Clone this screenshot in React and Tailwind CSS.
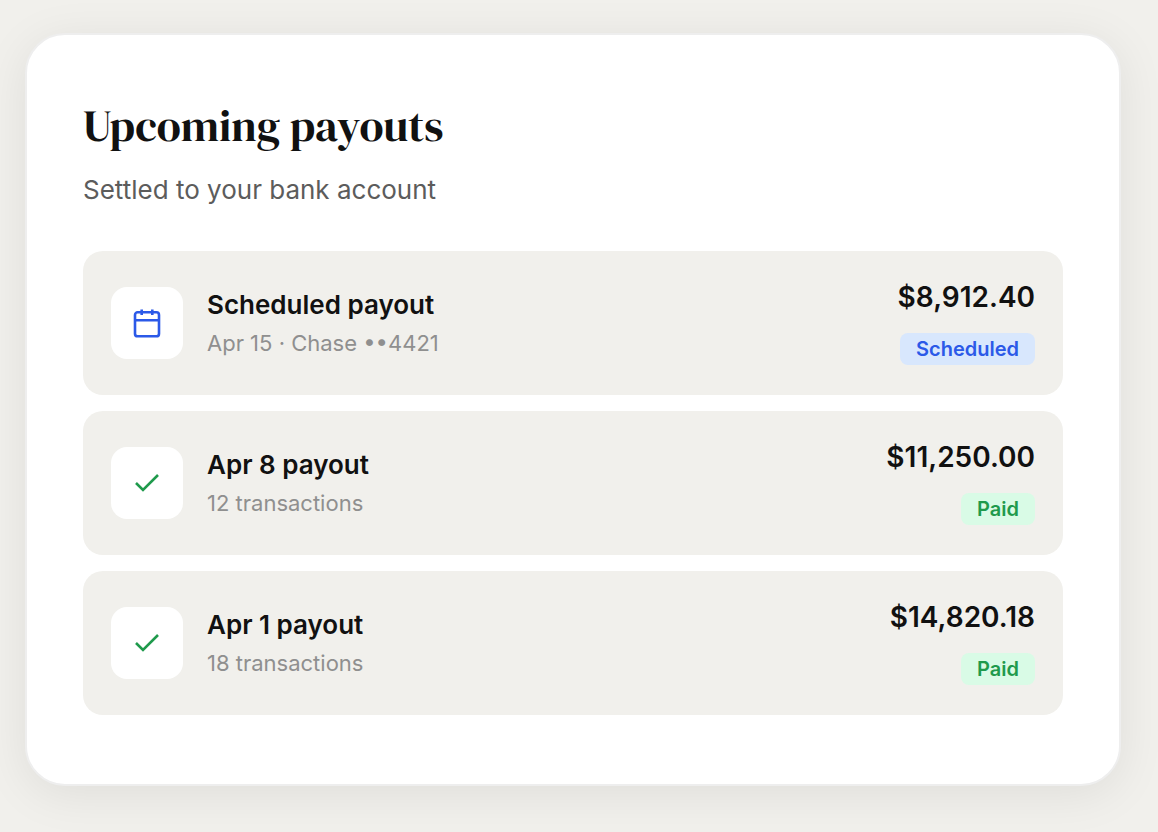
import React from "react";

const payouts = [
  { id: 1, title: "Scheduled payout", detail: "Apr 15 · Chase ••4421", amount: "$8,912.40", status: "Scheduled" },
  { id: 2, title: "Apr 8 payout", detail: "12 transactions", amount: "$11,250.00", status: "Paid" },
  { id: 3, title: "Apr 1 payout", detail: "18 transactions", amount: "$14,820.18", status: "Paid" },
];

const CalendarIcon = () => (
  <svg width="28" height="28" viewBox="0 0 28 28" fill="none" stroke="currentColor" strokeWidth="2.6" className="overflow-visible text-[#2b59e8]" aria-hidden="true">
    <rect x="2" y="3.3" width="24" height="24" rx="2.6" />
    <path d="M2 11.3h24M8.7 0.6v5.4M19.3 0.6v5.4" />
  </svg>
);

const CheckIcon = () => (
  <svg width="28" height="28" viewBox="0 0 28 28" fill="none" stroke="currentColor" strokeWidth="2.6" className="text-[#1f9a4c]" aria-hidden="true">
    <path d="M3 14l7 7L25 6" />
  </svg>
);

const PayoutRow = ({ payout }) => {
  const paid = payout.status === "Paid";

  return (
    <li className="flex items-center gap-6 min-h-36 px-7 rounded-[20px] bg-[#f1f0ec]">
      <div className="flex items-center justify-center shrink-0 size-18 rounded-2xl bg-white">
        {paid ? <CheckIcon /> : <CalendarIcon />}
      </div>
      <div className="flex-1 min-w-0">
        <h2 className="text-[26px] leading-8 font-semibold text-[#111111]">{payout.title}</h2>
        <p className="mt-2 text-[22px] leading-7 text-[#8f8f8f]">{payout.detail}</p>
      </div>
      <div className="flex flex-col items-end">
        <p className="text-[28px] leading-8 font-semibold text-[#111111]">{payout.amount}</p>
        <span
          className={
            paid
              ? "mt-5 px-4 rounded-lg text-[20px] leading-8 font-semibold bg-[#d9fbe6] text-[#1f9a4c]"
              : "mt-5 px-4 rounded-lg text-[20px] leading-8 font-semibold bg-[#d8e7fd] text-[#2b59e8]"
          }
        >
          {payout.status}
        </span>
      </div>
    </li>
  );
};

const App = () => {
  return (
    <main className="min-h-screen pt-[33px] pr-[37px] pb-[46px] pl-[25px] bg-[#f1f0ec] font-['Inter',sans-serif]">
      <section className="px-14 pt-[63px] pb-[69px] rounded-[40px] border-2 border-[#eeeeee] bg-white shadow-[0_8px_48px_rgba(0,0,0,0.08)]">
        <h1 className="font-['DM_Serif_Display','Liberation_Serif',serif] text-[44px] leading-14 font-normal text-[#111111]">
          Upcoming payouts
        </h1>
        <p className="mt-4 text-[26px] leading-10 text-[#5c5c5c]">Settled to your bank account</p>
        <ul className="flex flex-col gap-4 mt-[41px]">
          {payouts.map((payout) => (
            <PayoutRow key={payout.id} payout={payout} />
          ))}
        </ul>
      </section>
    </main>
  );
};

export default App;
